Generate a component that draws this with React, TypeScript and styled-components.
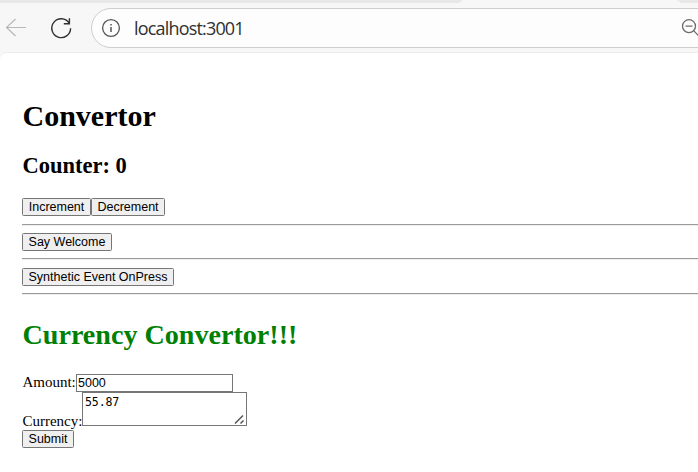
import React, { useState } from "react";
import styled, { createGlobalStyle } from "styled-components";

const GlobalStyle = createGlobalStyle`
  * { box-sizing: border-box; }
  html, body { margin: 0; padding: 0; overflow: hidden; background: #fff; }
`;

const Window = styled.div`
  width: 698px;
  height: 472px;
  display: flex;
  flex-direction: column;
  overflow: hidden;
  background: #f7f7f7;
`;

const TabStrip = styled.div`
  height: 3px;
  flex: none;
  display: flex;
  justify-content: space-between;
`;

const InactiveTabs = styled.div<{ $width: number; $side: "left" | "right" }>`
  width: ${(p) => p.$width}px;
  background: #e8e8e8;
  clip-path: ${(p) =>
    p.$side === "left"
      ? "polygon(0 0, 100% 0, calc(100% - 4px) 100%, 0 100%)"
      : "polygon(0 0, 100% 0, 100% 100%, 4px 100%)"};
`;

const Toolbar = styled.div`
  height: 49px;
  flex: none;
  display: flex;
  align-items: center;
  padding: 1px 0 0 4px;
`;

const ToolButton = styled.button<{ $gap: number }>`
  width: 24px;
  height: 24px;
  padding: 0;
  margin: 0 ${(p) => p.$gap}px 0 0;
  border: 0;
  background: none;
  flex: none;

  svg { display: block; }
`;

const AddressBar = styled.div`
  width: 660px;
  height: 40px;
  flex: none;
  display: flex;
  align-items: center;
  border: 1px solid #cecece;
  border-radius: 20px;
  background: #fdfdfd;
  padding-left: 9px;

  svg { flex: none; }
`;

const Url = styled.span`
  width: 547px;
  margin: -1px 0 0 13px;
  font: 18px/24px "Segoe UI", "Open Sans", sans-serif;
  letter-spacing: -0.82px;
  color: #303030;
`;

const Page = styled.main`
  flex: 1;
  display: flex;
  flex-direction: column;
  align-items: flex-start;
  padding: 46px 0 0 22px;
  border-top: 1px solid #ededed;
  border-top-left-radius: 7px;
  background: #fff;
  font: 15px/17px "Liberation Serif", serif;
  color: #000;
`;

const Title = styled.h1<{ $accent?: boolean }>`
  margin: ${(p) => (p.$accent ? "23px 0 22px" : "0 0 20px")};
  padding-left: 0.5px;
  font-size: ${(p) => (p.$accent ? 28.1 : 30)}px;
  line-height: 34px;
  color: ${(p) => (p.$accent ? "green" : "#000")};
`;

const CounterTitle = styled.h2`
  margin: 0 0 19px;
  padding-left: 0.5px;
  font-size: 22.5px;
  line-height: 26px;
`;

const Row = styled.div`
  display: flex;
`;

const Button = styled.button<{ $width: number }>`
  width: ${(p) => p.$width}px;
  height: 18px;
  margin: 0;
  padding: 0;
  border: 1px solid #767676;
  border-radius: 1.5px;
  background: #efefef;
  color: #000;
  font: 12.5px/15px "Liberation Sans", sans-serif;
  white-space: nowrap;
`;

const Rule = styled.hr<{ $above: number; $below: number }>`
  width: 100%;
  height: 2px;
  margin: ${(p) => p.$above}px 0 ${(p) => p.$below}px;
  border: 0;
  border-top: 1px solid #9a9a9a;
  border-bottom: 1px solid #eee;
`;

const Field = styled.label`
  display: flex;
  align-items: flex-end;
`;

const FieldName = styled.span<{ $width: number; $drop: number }>`
  width: ${(p) => p.$width}px;
  height: 17px;
  margin-bottom: ${(p) => -p.$drop}px;
  padding-left: 0.4px;
  white-space: nowrap;
`;

const AmountInput = styled.input`
  width: 157px;
  height: 18px;
  padding: 0 1px;
  border: 1px solid #767676;
  border-radius: 0;
  font: 12.5px/16px "Liberation Sans", sans-serif;
  color: #000;
`;

const CurrencyBox = styled.span`
  position: relative;
  display: block;
  width: 165px;
  height: 34px;

  svg {
    position: absolute;
    right: 2px;
    bottom: 1px;
    pointer-events: none;
  }
`;

const CurrencyArea = styled.textarea`
  display: block;
  width: 165px;
  height: 34px;
  padding: 2px;
  border: 1px solid #767676;
  resize: none;
  overflow: hidden;
  font: 11.6px/14px Consolas, "DejaVu Sans Mono", monospace;
  letter-spacing: -0.15px;
  color: #000;
`;

const SubmitRow = styled(Row)`
  margin-top: 4px;
`;

function BackIcon() {
  return (
    <svg width="24" height="24" fill="none" stroke="#b8b8b8" strokeWidth="1.2">
      <path d="M22 11.5H2.5M11.5 3 2.5 11.5l9 8.5" />
    </svg>
  );
}

function ReloadIcon() {
  return (
    <svg width="24" height="24" fill="none" stroke="#303030" strokeWidth="1.4">
      <path d="M20.1 7.1A9.4 9.4 0 1 0 21.6 12.2M20.4 2.3v5.4h-5.6" />
    </svg>
  );
}

function InfoIcon() {
  return (
    <svg width="20" height="20" fill="none" stroke="#555" strokeWidth="1.3">
      <circle cx="10" cy="10" r="8.4" />
      <path d="M10 9v5M10 6v1.6" strokeWidth="1.5" />
    </svg>
  );
}

function ZoomOutIcon() {
  return (
    <svg width="20" height="20" fill="none" stroke="#6b6b6b" strokeWidth="1.3">
      <circle cx="8" cy="8.2" r="6.5" />
      <path d="M4.5 8.2h7M12.8 12.9l6 6" />
    </svg>
  );
}

function ResizeGrip() {
  return (
    <svg width="11" height="11" fill="none" stroke="#555" strokeWidth="1.5">
      <path d="M1 9.5 9 1.5M6.5 9.5 9.5 6.5" />
    </svg>
  );
}

export default function App() {
  const [count, setCount] = useState(0);
  const [amount, setAmount] = useState("5000");
  const [currency, setCurrency] = useState("55.87");

  return (
    <>
      <GlobalStyle />
      <Window>
        <TabStrip>
          <InactiveTabs $width={463} $side="left" />
          <InactiveTabs $width={21} $side="right" />
        </TabStrip>
        <Toolbar>
          <ToolButton $gap={21} aria-label="Back"><BackIcon /></ToolButton>
          <ToolButton $gap={18} aria-label="Reload"><ReloadIcon /></ToolButton>
          <AddressBar>
            <InfoIcon />
            <Url>localhost:3001</Url>
            <ZoomOutIcon />
          </AddressBar>
        </Toolbar>
        <Page>
          <Title>Convertor</Title>
          <CounterTitle>Counter: {count}</CounterTitle>
          <Row>
            <Button $width={69} onClick={() => setCount(count + 1)}>Increment</Button>
            <Button $width={74} onClick={() => setCount(count - 1)}>Decrement</Button>
          </Row>
          <Rule $above={8} $below={7} />
          <Button $width={90}>Say Welcome</Button>
          <Rule $above={7} $below={8} />
          <Button $width={152}>Synthetic Event OnPress</Button>
          <Rule $above={7} $below={0} />
          <Title $accent>Currency Convertor!!!</Title>
          <Field>
            <FieldName $width={54} $drop={-1}>Amount:</FieldName>
            <AmountInput value={amount} onChange={(e) => setAmount(e.target.value)} />
          </Field>
          <Field>
            <FieldName $width={60} $drop={4}>Currency:</FieldName>
            <CurrencyBox>
              <CurrencyArea value={currency} onChange={(e) => setCurrency(e.target.value)} />
              <ResizeGrip />
            </CurrencyBox>
          </Field>
          <SubmitRow>
            <Button $width={52}>Submit</Button>
          </SubmitRow>
        </Page>
      </Window>
    </>
  );
}
